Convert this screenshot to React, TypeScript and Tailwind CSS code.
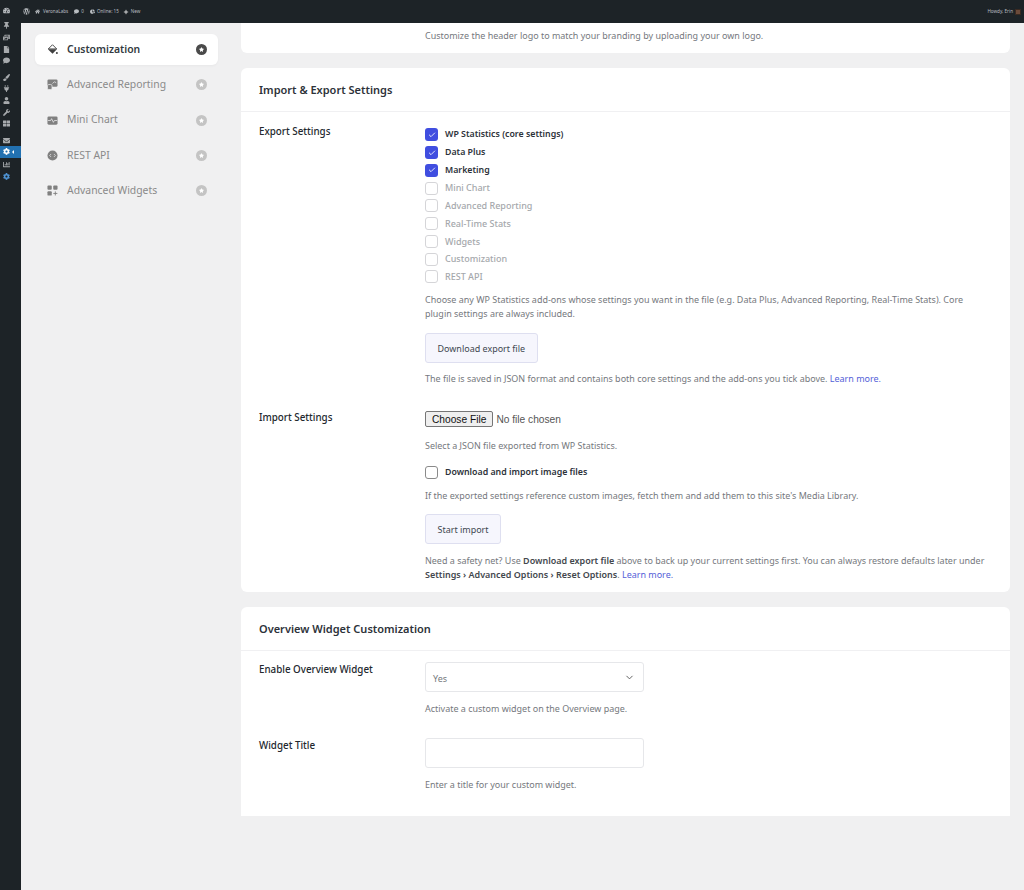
import { ReactNode } from "react";
import { Check, ChevronDown, Plus } from "lucide-react";
import {
  FaWordpress,
  FaHome,
  FaComment,
  FaThumbtack,
  FaPhotoVideo,
  FaFile,
  FaPaintBrush,
  FaPlug,
  FaUser,
  FaWrench,
  FaThLarge,
  FaEnvelope,
  FaTachometerAlt,
  FaChartBar,
  FaChartPie,
  FaCog,
  FaStar,
} from "react-icons/fa";

const addons = [
  { label: "WP Statistics (core settings)", on: true },
  { label: "Data Plus", on: true },
  { label: "Marketing", on: true },
  { label: "Mini Chart", on: false },
  { label: "Advanced Reporting", on: false },
  { label: "Real-Time Stats", on: false },
  { label: "Widgets", on: false },
  { label: "Customization", on: false },
  { label: "REST API", on: false },
];

function BucketIcon() {
  return (
    <svg viewBox="0 0 12 12" className="w-[11px] h-[11px]" fill="#404040">
      <path d="M6 .8 10.6 5.4H1.4Z" fill="none" stroke="#404040" strokeWidth="1" />
      <path d="M1 5.6h9.8L6 10.6Z" />
      <circle cx="10.8" cy="9.8" r="1.1" />
    </svg>
  );
}

function ReportIcon() {
  return (
    <svg viewBox="0 0 12 12" className="w-[11px] h-[11px]">
      <rect x="0.5" y="0.5" width="11" height="8" rx="1.5" fill="#808080" />
      <rect x="0.5" y="6" width="5" height="5.5" rx="1.5" fill="#808080" stroke="#efeff0" strokeWidth="0.8" />
      <path d="M6 5l2-2 2 1" stroke="#efeff0" strokeWidth="0.8" fill="none" />
    </svg>
  );
}

function ChartIcon() {
  return (
    <svg viewBox="0 0 12 12" className="w-[11px] h-[11px]">
      <rect x="0.5" y="1.5" width="11" height="9" rx="1.5" fill="#808080" />
      <path d="M1 6h3l1-2 2 4 1-2h3" stroke="#efeff0" strokeWidth="0.8" fill="none" />
    </svg>
  );
}

function ApiIcon() {
  return (
    <svg viewBox="0 0 12 12" className="w-[11px] h-[11px]">
      <circle cx="6" cy="6" r="5.5" fill="#808080" />
      <path d="M4.4 4.4 2.9 6l1.5 1.6M7.6 4.4 9.1 6 7.6 7.6" stroke="#efeff0" strokeWidth="0.8" fill="none" />
    </svg>
  );
}

function WidgetsIcon() {
  return (
    <svg viewBox="0 0 12 12" className="w-[11px] h-[11px]" fill="#808080">
      <rect x="0.5" y="0.5" width="4.7" height="4.7" rx="1" />
      <rect x="6.8" y="0.5" width="4.7" height="4.7" rx="1" />
      <rect x="0.5" y="6.8" width="4.7" height="4.7" rx="1" />
      <path d="M9.1 7v4.4M6.9 9.2h4.4" stroke="#808080" strokeWidth="1" />
    </svg>
  );
}

function NavItem({ icon, label, active }: { icon: ReactNode; label: string; active?: boolean }) {
  return (
    <div
      className={
        active
          ? "flex items-center h-[31px] pl-[12px] pr-[11px] bg-white rounded-[6px] shadow-[0_1px_3px_rgba(0,0,0,0.04)]"
          : "flex items-center h-[31px] pl-[12px] pr-[11px]"
      }
    >
      <span className="w-[20px] shrink-0">{icon}</span>
      <span
        className={
          active
            ? "flex-1 text-[10.4px] font-semibold text-[#333a41]"
            : "flex-1 text-[10.4px] text-[#8a8a8a]"
        }
      >
        {label}
      </span>
      <span
        className={
          active
            ? "w-[11px] h-[11px] rounded-full bg-[#4a4a4a] flex items-center justify-center"
            : "w-[11px] h-[11px] rounded-full bg-[#c4c4c4] flex items-center justify-center"
        }
      >
        <FaStar className="text-white text-[5px]" />
      </span>
    </div>
  );
}

function Box({ on }: { on: boolean }) {
  return (
    <span
      className={
        on
          ? "w-[13px] h-[13px] rounded-[3px] bg-[#404ee0] flex items-center justify-center shrink-0"
          : "w-[13px] h-[13px] rounded-[3px] bg-white border border-[#d5d5d8] flex items-center justify-center shrink-0"
      }
    >
      {on && <Check className="w-[8px] h-[8px] text-white" strokeWidth={2.5} />}
    </span>
  );
}

function Help({ children, className = "" }: { children: ReactNode; className?: string }) {
  return <p className={`text-[8.97px] leading-[14px] text-[#75787d] ${className}`}>{children}</p>;
}

function Row({ label, children, className = "" }: { label: string; children: ReactNode; className?: string }) {
  return (
    <div className={`flex px-[18px] ${className}`}>
      <div className="w-[166px] shrink-0 pt-[1px] text-[9.8px] leading-[14px] font-medium text-[#23282e]">{label}</div>
      <div className="flex-1">{children}</div>
    </div>
  );
}

function Button({ children, className = "" }: { children: ReactNode; className?: string }) {
  return (
    <div className={`inline-flex items-center justify-center h-[30px] px-[11.5px] pt-[1px] rounded-[3px] border border-[#dedff0] bg-[#f6f6fd] text-[8.97px] text-[#404750] ${className}`}>
      {children}
    </div>
  );
}

function CardHeader({ title }: { title: string }) {
  return (
    <div className="h-[44px] px-[18px] pt-[2px] flex items-center border-b border-[#f0f0f2] text-[11px] font-semibold text-[#2d3239]">
      {title}
    </div>
  );
}

export default function App() {
  return (
    <div className="w-[1024px] h-[890px] overflow-hidden flex flex-col bg-[#f0f0f1] font-['Noto_Sans','Open_Sans',sans-serif]">
      {/* Admin bar */}
      <div className="h-[23px] shrink-0 bg-[#1d2327] flex items-center text-[#b9bdc1] text-[4.6px]">
        <FaTachometerAlt className="ml-[3px] w-[7px] h-[7px] -mt-[2px]" />
        <FaWordpress className="ml-[13px] w-[7px] h-[7px]" />
        <FaHome className="ml-[5px] w-[5px] h-[5px]" />
        <span className="ml-[3px]">VeronaLabs</span>
        <FaComment className="ml-[6px] w-[5px] h-[5px]" />
        <span className="ml-[2px]">0</span>
        <FaChartPie className="ml-[6px] w-[5px] h-[5px]" />
        <span className="ml-[2px]">Online: 15</span>
        <Plus className="ml-[4px] w-[6px] h-[6px] text-white" strokeWidth={3} />
        <span className="ml-[2px]">New</span>
        <span className="ml-auto">Howdy, Erin</span>
        <span className="ml-[2px] mr-[3px] w-[6px] h-[6px] bg-[#6b4a3a] border border-[#3a2a22]" />
      </div>

      <div className="flex-1 flex min-h-0">
        {/* WP sidebar */}
        <div className="w-[21px] shrink-0 bg-[#1d2327] text-[#a7aaad] flex flex-col">
          <div className="-mt-[3px]" />
          {[FaThumbtack, FaPhotoVideo, FaFile, FaComment].map((I, i) => (
            <div key={i} className="h-[11.7px] pl-[3px] flex items-center">
              <I className="w-[7px] h-[7px]" />
            </div>
          ))}
          <div className="h-[4.5px] shrink-0" />
          {[FaPaintBrush, FaPlug, FaUser, FaWrench, FaThLarge].map((I, i) => (
            <div key={i} className="h-[11.7px] pl-[3px] flex items-center">
              <I className="w-[7px] h-[7px]" />
            </div>
          ))}
          <div className="h-[4.5px] shrink-0" />
          <div className="h-[11.7px] pl-[3px] flex items-center">
            <FaEnvelope className="w-[7px] h-[7px]" />
          </div>
          <div className="h-[12px] bg-[#2271b1] text-white pl-[3px] flex items-center gap-[2px]">
            <FaCog className="w-[7px] h-[7px]" />
            <span className="w-0 h-0 border-y-[2px] border-y-transparent border-r-[2px] border-r-white" />
          </div>
          <div className="h-[11.7px] mt-[1px] pl-[3px] flex items-center">
            <FaChartBar className="w-[7px] h-[7px]" />
          </div>
          <div className="h-[11.7px] pl-[3px] flex items-center text-[#4f94d4]">
            <FaCog className="w-[7px] h-[7px]" />
          </div>
        </div>

        {/* Add-on nav */}
        <div className="w-[183px] ml-[14px] shrink-0 pt-[11px] flex flex-col gap-[4.3px]">
          <NavItem active icon={<BucketIcon />} label="Customization" />
          <NavItem icon={<ReportIcon />} label="Advanced Reporting" />
          <NavItem icon={<ChartIcon />} label="Mini Chart" />
          <NavItem icon={<ApiIcon />} label="REST API" />
          <NavItem icon={<WidgetsIcon />} label="Advanced Widgets" />
        </div>

        {/* Settings */}
        <div className="w-[769px] ml-[23px] flex flex-col">
          <div className="h-[30px] bg-white rounded-b-[6px] pl-[184px] pt-[6px]">
            <Help>Customize the header logo to match your branding by uploading your own logo.</Help>
          </div>

          <div className="mt-[15px] h-[524px] bg-white rounded-[6px]">
            <CardHeader title="Import & Export Settings" />
            <Row label="Export Settings" className="pt-[12px]">
              <div className="pt-[2px]">
                {addons.map((a) => (
                  <div key={a.label} className="h-[17.75px] flex items-center gap-[7px]">
                    <Box on={a.on} />
                    <span
                      className={
                        a.on
                          ? "text-[8.8px] font-semibold text-[#2d3239]"
                          : "text-[9px] font-medium text-[#a5a8ac]"
                      }
                    >
                      {a.label}
                    </span>
                  </div>
                ))}
              </div>
              <Help className="mt-[7px] max-w-[560px]">
                Choose any WP Statistics add-ons whose settings you want in the file (e.g. Data Plus, Advanced Reporting,
                Real-Time Stats). Core plugin settings are always included.
              </Help>
              <Button className="mt-[12px]">Download export file</Button>
              <Help className="mt-[9px]">
                The file is saved in JSON format and contains both core settings and the add-ons you tick above.{" "}
                <span className="text-[#5360d8]">Learn more.</span>
              </Help>
            </Row>
            <Row label="Import Settings" className="mt-[24px]">
              <input
                type="file"
                className="block mt-[1px] text-[10.2px] leading-[16px] text-[#555] font-['Liberation_Sans',sans-serif] file:mr-[3px] file:px-[6px] file:h-[16px] file:bg-[#efefef] file:border file:border-[#767676] file:rounded-[2px] file:text-[#111]"
              />
              <Help className="mt-[11px]">Select a JSON file exported from WP Statistics.</Help>
              <div className="mt-[13px] flex items-center gap-[7px]">
                <span className="w-[13px] h-[13px] rounded-[3px] bg-white border border-[#8a8a8a] shrink-0" />
                <span className="text-[8.8px] font-semibold text-[#2d3239]">Download and import image files</span>
              </div>
              <Help className="mt-[10px]">
                If the exported settings reference custom images, fetch them and add them to this site's Media Library.
              </Help>
              <Button className="mt-[11.5px]">Start import</Button>
              <Help className="mt-[9.5px]">
                Need a safety net? Use <b className="font-semibold text-[#43474d]">Download export file</b> above to back
                up your current settings first. You can always restore defaults later under{" "}
                <b className="font-semibold text-[#43474d]">Settings › Advanced Options › Reset Options</b>.{" "}
                <span className="text-[#5360d8]">Learn more.</span>
              </Help>
            </Row>
          </div>

          <div className="mt-[15px] h-[209px] bg-white rounded-t-[6px]">
            <CardHeader title="Overview Widget Customization" />
            <Row label="Enable Overview Widget" className="pt-[11px]">
              <div className="w-[219px] h-[30px] rounded-[3px] border border-[#e6e7ea] flex items-center justify-between pl-[7px] pr-[8px] text-[8.97px] text-[#75787d]">
                <span className="pt-[3px]">Yes</span>
                <ChevronDown className="w-[11px] h-[11px] text-[#555]" strokeWidth={2} />
              </div>
              <Help className="mt-[10px]">Activate a custom widget on the Overview page.</Help>
            </Row>
            <Row label="Widget Title" className="mt-[22px]">
              <div className="w-[219px] h-[30px] rounded-[3px] border border-[#e6e7ea]" />
              <Help className="mt-[10px]">Enter a title for your custom widget.</Help>
            </Row>
          </div>
        </div>
      </div>
    </div>
  );
}
